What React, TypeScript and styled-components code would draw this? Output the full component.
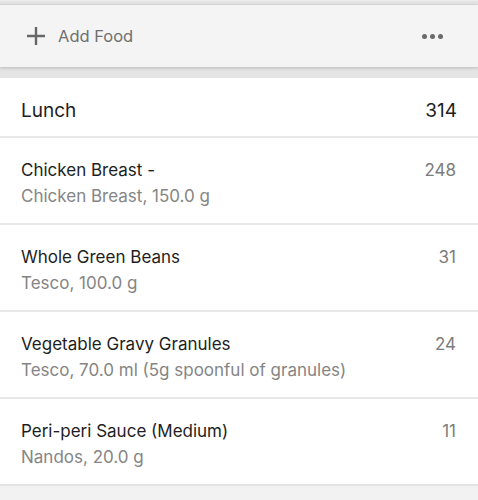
import React from 'react';
import styled, { createGlobalStyle } from 'styled-components';

const GlobalStyle = createGlobalStyle`
    html, body {
        margin: 0;
        padding: 0;
        background: #f2f2f2;
        font-family: Inter, 'Liberation Sans', sans-serif;
        -webkit-font-smoothing: antialiased;
    }
    * {
        box-sizing: border-box;
    }
`;

const Page = styled.div`
    width: 478px;
    height: 500px;
    overflow: hidden;
    background: #f2f2f2;
`;

const HeaderBand = styled.div`
    height: 78px;
    background: #e4e4e4;
    padding: 4px 0 0;
    border-top: 1px solid #ececec;
`;

const ActionBar = styled.div`
    height: 62px;
    display: flex;
    align-items: center;
    justify-content: space-between;
    padding: 0 35px 0 26px;
    background: #f4f4f4;
    box-shadow: 0 1px 3px rgba(0, 0, 0, 0.18), 0 -1px 2px rgba(0, 0, 0, 0.06);
`;

const AddButton = styled.button`
    display: flex;
    align-items: center;
    gap: 12px;
    border: 0;
    background: none;
    padding: 0;
    font: inherit;
    font-size: 16.5px;
    color: #707070;
    cursor: pointer;
`;

const MoreButton = styled.button`
    display: flex;
    gap: 3px;
    border: 0;
    background: none;
    padding: 0;
    cursor: pointer;

    & span {
        width: 5px;
        height: 5px;
        border-radius: 50%;
        background: #6a6a6a;
    }
`;

const Meal = styled.section`
    background: #fff;
    border-bottom: 2px solid #e4e4e4;
`;

const MealHeader = styled.div`
    height: 60px;
    display: flex;
    align-items: center;
    justify-content: space-between;
    padding: 6px 21px 0;
    font-size: 19px;
    color: #1e1e1e;
    border-bottom: 2px solid #e8e8e8;
`;

const FoodRow = styled.div<{ $last?: boolean }>`
    height: ${(p) => (p.$last ? 85 : 87)}px;
    display: flex;
    justify-content: space-between;
    padding: 22px 21px 0;
    border-bottom: ${(p) => (p.$last ? 'none' : '2px solid #e8e8e8')};
`;

const FoodInfo = styled.div`
    display: flex;
    flex-direction: column;
    gap: 5px;
`;

const FoodName = styled.div`
    font-size: 17px;
    color: #1e1e1e;
    line-height: 21px;
`;

const FoodDetail = styled.div`
    font-size: 17px;
    color: #858585;
    line-height: 21px;
`;

const Calories = styled.div`
    font-size: 17px;
    color: #7c7c7c;
    line-height: 21px;
    padding-right: 1px;
`;

const foods = [
    { name: 'Chicken Breast -', detail: 'Chicken Breast, 150.0 g', kcal: 248 },
    { name: 'Whole Green Beans', detail: 'Tesco, 100.0 g', kcal: 31 },
    { name: 'Vegetable Gravy Granules', detail: 'Tesco, 70.0 ml (5g spoonful of granules)', kcal: 24 },
    { name: 'Peri-peri Sauce (Medium)', detail: 'Nandos, 20.0 g', kcal: 11 },
];

const PlusIcon = () => (
    <svg width="20" height="20" viewBox="0 0 20 20">
        <path d="M10 1v18M1 10h18" stroke="#666" strokeWidth="2.4" fill="none" />
    </svg>
);

const App: React.FC = () => {
    return (
        <Page>
            <GlobalStyle />
            <HeaderBand>
                <ActionBar>
                    <AddButton type="button">
                        <PlusIcon />
                        Add Food
                    </AddButton>
                    <MoreButton type="button" aria-label="More">
                        <span />
                        <span />
                        <span />
                    </MoreButton>
                </ActionBar>
            </HeaderBand>
            <Meal>
                <MealHeader>
                    <span>Lunch</span>
                    <span>314</span>
                </MealHeader>
                {foods.map((food, i) => (
                    <FoodRow key={food.name} $last={i === foods.length - 1}>
                        <FoodInfo>
                            <FoodName>{food.name}</FoodName>
                            <FoodDetail>{food.detail}</FoodDetail>
                        </FoodInfo>
                        <Calories>{food.kcal}</Calories>
                    </FoodRow>
                ))}
            </Meal>
        </Page>
    );
};

export default App;
